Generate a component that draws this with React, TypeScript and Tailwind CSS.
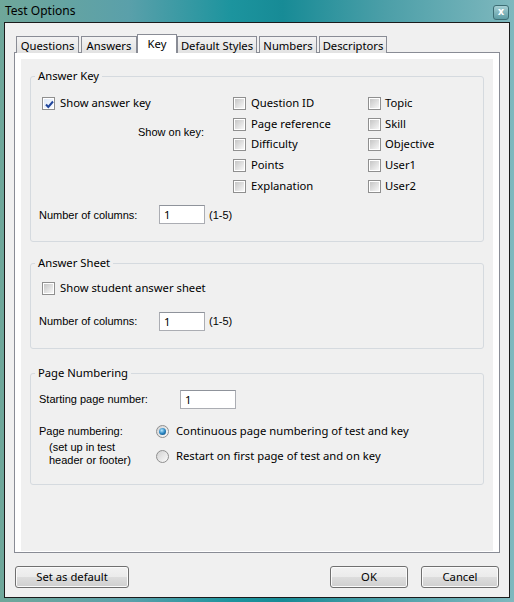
import React from "react";

const ui = "font-['Segoe_UI','Noto_Sans',sans-serif] text-[11.25px] text-black";
const lbl = "font-['Liberation_Sans',Arial,sans-serif] text-[11px] text-black";

function Check({ checked }: { checked?: boolean }) {
  return (
    <span className="relative inline-flex h-[13px] w-[13px] shrink-0 items-center justify-center border border-[#8f8f8f] bg-white">
      {checked ? (
        <span className="h-[9px] w-[9px] bg-linear-to-br from-[#dfe8f6] to-[#f9fbff]" />
      ) : (
        <span className="h-[9px] w-[9px] bg-linear-to-br from-[#c6c6c6] to-[#f7f7f7]" />
      )}
      {checked && (
        <svg className="absolute left-[1px] top-[1px]" width="11" height="11" viewBox="0 0 11 11">
          <path d="M2 5.5 L4.3 8 L9 2.5" fill="none" stroke="#21469c" strokeWidth="2" />
        </svg>
      )}
    </span>
  );
}

function Radio({ checked }: { checked?: boolean }) {
  return (
    <span className="relative inline-flex h-[13px] w-[13px] shrink-0 items-center justify-center rounded-full border border-[#8f8f8f] bg-linear-to-br from-[#d2d2d2] to-[#fbfbfb]">
      {checked && (
        <span className="h-[7px] w-[7px] rounded-full bg-[radial-gradient(circle_at_40%_35%,#b8e8ff_0%,#2a86c2_50%,#0d3e6a_100%)]" />
      )}
    </span>
  );
}

function Box({ w }: { w: string }) {
  return (
    <div className={`${w} h-[19px] border border-[#abadb3] border-t-[#8f939b] bg-white pl-[4px] leading-[17px] ${ui}`}>
      1
    </div>
  );
}

const tabs = [
  { t: "Questions", c: "w-[63px]" },
  { t: "Answers", c: "ml-[2px] w-[56px]" },
  { t: "Key", c: "w-[40px]", sel: true },
  { t: "Default Styles", c: "w-[80px]" },
  { t: "Numbers", c: "ml-[2px] w-[58px]" },
  { t: "Descriptors", c: "ml-[2px] w-[68px]" },
];

const col2 = ["Question ID", "Page reference", "Difficulty", "Points", "Explanation"];
const col3 = ["Topic", "Skill", "Objective", "User1", "User2"];

const btn =
  "h-[22px] rounded-[3px] border border-[#707070] bg-[linear-gradient(180deg,#f2f2f2_0%,#ebebeb_50%,#dddddd_50%,#cfcfcf_100%)] shadow-[inset_0_0_0_1px_#fbfbfb]";

export default function App() {
  return (
    <div className="flex h-[602px] w-[514px] flex-col overflow-hidden bg-[linear-gradient(90deg,#6fa79a_0%,#5aa0aa_25%,#1c949e_45%,#178b96_55%,#4c9fa8_75%,#7fb8be_100%)]">
      {/* title bar */}
      <div className="flex h-[22px] shrink-0 items-center justify-between pl-[5px] pr-[5px]">
        <span className={`${ui} text-[12px] text-[#263a3d]`}>Test Options</span>
        <div className="mt-[2px] flex h-[15px] w-[16px] items-center justify-center rounded-[3px] border border-[#3d6d74] bg-linear-to-b from-[#a6d0d5] to-[#5d9ca4] font-['DejaVu_Sans',sans-serif] text-[10px] font-bold leading-none text-white">
          x
        </div>
      </div>

      {/* client */}
      <div className="mx-[4px] mb-[4px] flex flex-1 flex-col border border-[#1b1b1b] bg-[#f0f0f0] pt-[11px]">
        <div className="px-[9px]">
          <div className="flex h-[19px] items-end pl-[2px]">
            {tabs.map((tb) =>
              tb.sel ? (
                <div
                  key={tb.t}
                  className={`${tb.c} relative z-10 flex h-[19px] items-start justify-center border border-b-0 border-[#898c95] bg-white pt-[1px] leading-[15px] ${ui}`}
                >
                  {tb.t}
                </div>
              ) : (
                <div
                  key={tb.t}
                  className={`${tb.c} flex h-[17px] items-center justify-center border border-b-0 border-[#898c95] bg-linear-to-b from-[#f3f3f3] to-[#e2e2e2] leading-[15px] ${ui}`}
                >
                  {tb.t}
                </div>
              )
            )}
          </div>

          {/* panel */}
          <div className="-mt-[1px] flex h-[501px] flex-col border border-[#898c95] bg-white px-[6px] pb-[1px] pt-[6px]">
            <div className="flex flex-1 flex-col bg-[#f0f0f0] px-[9px] pt-[10px]">
              {/* Answer Key */}
              <fieldset className="h-[173px] rounded-[3px] border border-[#d5dadf]">
                <legend className={`ml-[4px] px-[3px] leading-[14px] ${ui}`}>Answer Key</legend>
                <div className="flex pt-[10px]">
                  <div className="w-[202px]">
                    <div className={`flex h-[20.75px] items-center gap-[5px] pl-[11px] ${ui}`}>
                      <Check checked />
                      <span>Show answer key</span>
                    </div>
                    <div className={`mt-[8px] flex h-[21px] items-center justify-end pr-[29px] ${lbl}`}>
                      Show on key:
                    </div>
                  </div>
                  <div className="w-[135px]">
                    {col2.map((s) => (
                      <div key={s} className={`flex h-[20.75px] items-center gap-[5px] ${ui}`}>
                        <Check />
                        <span>{s}</span>
                      </div>
                    ))}
                  </div>
                  <div>
                    {col3.map((s) => (
                      <div key={s} className={`flex h-[20.75px] items-center gap-[4px] ${ui}`}>
                        <Check />
                        <span>{s}</span>
                      </div>
                    ))}
                  </div>
                </div>
                <div className="mt-[8px] flex h-[20px] items-center pl-[8px]">
                  <span className={`w-[120px] ${lbl}`}>Number of columns:</span>
                  <Box w="w-[46px]" />
                  <span className={`ml-[4px] ${lbl}`}>(1-5)</span>
                </div>
              </fieldset>

              {/* Answer Sheet */}
              <fieldset className="mt-[14px] h-[93px] rounded-[3px] border border-[#d5dadf]">
                <legend className={`ml-[4px] px-[3px] leading-[14px] ${ui}`}>Answer Sheet</legend>
                <div className={`mt-[8px] flex h-[21px] items-center gap-[5px] pl-[11px] ${ui}`}>
                  <Check />
                  <span>Show student answer sheet</span>
                </div>
                <div className="mt-[12px] flex h-[20px] items-center pl-[8px]">
                  <span className={`w-[120px] ${lbl}`}>Number of columns:</span>
                  <Box w="w-[46px]" />
                  <span className={`ml-[4px] ${lbl}`}>(1-5)</span>
                </div>
              </fieldset>

              {/* Page Numbering */}
              <fieldset className="mt-[17px] h-[119px] rounded-[3px] border border-[#d5dadf]">
                <legend className={`ml-[4px] px-[3px] leading-[14px] ${ui}`}>Page Numbering</legend>
                <div className="mt-[9px] flex h-[20px] items-center pl-[8px]">
                  <span className={`w-[141px] ${lbl}`}>Starting page number:</span>
                  <Box w="w-[56px]" />
                </div>
                <div className="mt-[12px] flex">
                  <div className={`w-[125px] pl-[8px] ${lbl}`}>
                    <div className="flex h-[20px] items-center">Page numbering:</div>
                    <div className="pl-[10px] leading-[13px]">(set up in test</div>
                    <div className="pl-[10px] leading-[13px]">header or footer)</div>
                  </div>
                  <div className={ui}>
                    <div className="flex h-[20px] items-center gap-[7px]">
                      <Radio checked />
                      <span>Continuous page numbering of test and key</span>
                    </div>
                    <div className="mt-[5px] flex h-[20px] items-center gap-[7px]">
                      <Radio />
                      <span>Restart on first page of test and on key</span>
                    </div>
                  </div>
                </div>
              </fieldset>
            </div>
          </div>
        </div>

        {/* buttons */}
        <div className="mt-[13px] flex px-[10px]">
          <button className={`w-[114px] ${btn} ${ui}`}>Set as default</button>
          <button className={`ml-auto w-[78px] ${btn} ${ui}`}>OK</button>
          <button className={`ml-[13px] w-[78px] ${btn} ${ui}`}>Cancel</button>
        </div>
      </div>
    </div>
  );
}
